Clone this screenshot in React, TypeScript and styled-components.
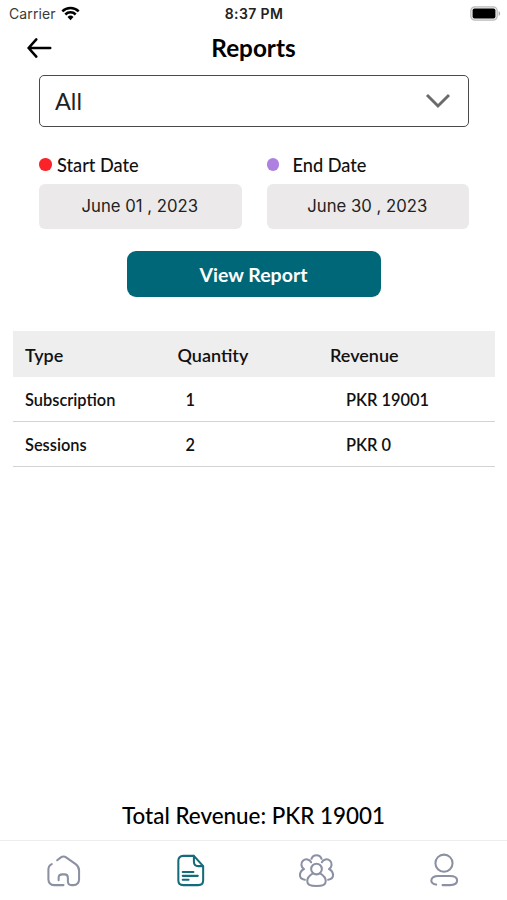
import React from "react";
import styled, { createGlobalStyle } from "styled-components";

const Global = createGlobalStyle`
  * { box-sizing: border-box; }
  body { margin: 0; background: #fff; }
`;

const Screen = styled.div`
  width: 507px;
  height: 900px;
  display: flex;
  flex-direction: column;
  background: #fff;
  color: #111;
  font-family: Lato, "Liberation Sans", sans-serif;
  overflow: hidden;
`;

const StatusBar = styled.div`
  height: 27px;
  flex: none;
  display: grid;
  grid-template-columns: 1fr auto 1fr;
  align-items: center;
  padding: 0 6px 0 9px;
  font-family: Inter, sans-serif;
`;
const Carrier = styled.div`
  display: flex;
  align-items: center;
  gap: 5px;
  font-size: 14px;
  color: #3a3a3a;
  letter-spacing: 0.1px;
`;
const Time = styled.div`
  font-size: 14px;
  letter-spacing: 0.4px;
  margin-right: 2px;
  font-weight: 600;
  color: #222;
`;
const Battery = styled.div`
  display: flex;
  justify-content: flex-end;
`;

const Header = styled.header`
  height: 48px;
  flex: none;
  display: grid;
  grid-template-columns: 26px 1fr 26px;
  align-items: center;
  padding: 0 26px 6px 26px;
`;
const Title = styled.h1`
  margin: 0;
  text-align: center;
  font-size: 24.3px;
  line-height: 30px;
  font-weight: 700;
  color: #000;
`;

const Form = styled.section`
  display: flex;
  flex-direction: column;
  padding: 0 38px 0 39px;
`;
const Select = styled.div`
  height: 52px;
  display: flex;
  align-items: center;
  justify-content: space-between;
  padding: 0 17px 1px 15px;
  border: 1.5px solid #4a4a4a;
  border-radius: 5px;
  font-size: 23.5px;
  color: #222;
`;
const Dates = styled.div`
  display: grid;
  grid-template-columns: 1fr 1fr;
  column-gap: 25px;
  margin-top: 25px;
`;
const DateLabel = styled.div<{ $gap: number }>`
  height: 25px;
  display: flex;
  align-items: center;
  gap: ${(p) => p.$gap}px;
  font-size: 18.2px;
  font-weight: 500;
`;
const Dot = styled.span<{ $color: string }>`
  width: 12.5px;
  height: 12.5px;
  border-radius: 50%;
  background: ${(p) => p.$color};
`;
const DateBox = styled.div`
  height: 45px;
  margin-top: 7px;
  border-radius: 6px;
  background: #ece9ea;
  display: flex;
  align-items: center;
  justify-content: center;
  font-family: Inter, sans-serif;
  font-size: 16.7px;
  padding: 0 1px 1px 0;
  line-height: 22px;
  color: #222;
`;
const ViewButton = styled.button`
  align-self: center;
  width: 254px;
  height: 46px;
  margin-top: 22px;
  padding: 0 1px 0 0;
  border: 0;
  border-radius: 9px;
  background: #006778;
  color: #fff;
  font: 700 19.5px Lato, sans-serif;
`;

const Table = styled.div`
  margin: 34px 12px 0 13px;
`;
const Row = styled.div<{ $head?: boolean }>`
  display: grid;
  grid-template-columns: ${(p) => (p.$head ? "152.5px 152.5px 1fr" : "160.5px 160.5px 1fr")};
  align-items: center;
  height: ${(p) => (p.$head ? 46 : 45)}px;
  padding: ${(p) => (p.$head ? 2 : 1)}px 0 0 12px;
  line-height: 20px;
  font-size: ${(p) => (p.$head ? 18 : 16.4)}px;
  font-weight: 600;
  background: ${(p) => (p.$head ? "#eeeeee" : "#fff")};
  border-bottom: ${(p) => (p.$head ? "0" : "1.5px solid #d3d3d3")};
`;

const Total = styled.div`
  margin-top: auto;
  height: 50px;
  display: flex;
  align-items: center;
  justify-content: center;
  font-size: 22.4px;
  font-weight: 500;
  color: #000;
`;
const TabBar = styled.nav`
  height: 60px;
  flex: none;
  display: grid;
  grid-template-columns: repeat(4, 1fr);
  justify-items: center;
  border-top: 1px solid #ededed;
  padding-top: 11px;
`;
const Tab = styled.svg<{ $active?: boolean }>`
  width: 37px;
  height: 37px;
  fill: none;
  stroke: ${(p) => (p.$active ? "#146c7b" : "#8b90a3")};
  stroke-width: 2.1;
  stroke-linecap: round;
  stroke-linejoin: round;
`;

const rows = [
  ["Subscription", "1", "PKR 19001"],
  ["Sessions", "2", "PKR 0"],
];

export default function App() {
  return (
    <Screen>
      <Global />
      <StatusBar>
        <Carrier>
          Carrier
          <svg width="19" height="15" viewBox="0 0 19 15" fill="none" stroke="#000" strokeWidth="2.5">
            <path d="M1.3 5.3a11.6 11.6 0 0 1 16.4 0M4.3 8.5a7.4 7.4 0 0 1 10.4 0" />
            <path d="M6.5 11a4.3 4.3 0 0 1 6 0l-3 3.2z" fill="#000" stroke="none" />
          </svg>
        </Carrier>
        <Time>8:37 PM</Time>
        <Battery>
          <svg width="31" height="15" viewBox="0 0 31 15">
            <rect x="0.8" y="0.8" width="26.4" height="13.4" rx="4" fill="#eee" stroke="#bbb" strokeWidth="1.2" />
            <rect x="2.6" y="2.6" width="22.8" height="9.8" rx="2" fill="#000" />
            <path d="M28.6 5.2c2 .7 2 3.9 0 4.6z" fill="#aaa" />
          </svg>
        </Battery>
      </StatusBar>

      <Header>
        <svg width="26" height="22" viewBox="0 0 26 22" fill="none" stroke="#000" strokeWidth="2.6" strokeLinecap="round" strokeLinejoin="round">
          <path d="M24.200 11H2.600M10.300 2.400 2.600 11l7.700 8.600" />
        </svg>
        <Title>Reports</Title>
      </Header>

      <Form>
        <Select>
          All
          <svg width="26" height="16" viewBox="0 0 26 16" fill="none" stroke="#6b6b6b" strokeWidth="2.9">
            <path d="m2 2 11 11L24 2" />
          </svg>
        </Select>
        <Dates>
          <div>
            <DateLabel $gap={5.5}><Dot $color="#fb2228" />Start Date</DateLabel>
            <DateBox>June 01 , 2023</DateBox>
          </div>
          <div>
            <DateLabel $gap={13.5}><Dot $color="#ae81e0" />End Date</DateLabel>
            <DateBox>June 30 , 2023</DateBox>
          </div>
        </Dates>
        <ViewButton>View Report</ViewButton>
      </Form>

      <Table>
        <Row $head>
          <span>Type</span>
          <span>Quantity</span>
          <span>Revenue</span>
        </Row>
        {rows.map((row) => (
          <Row key={row[0]}>
            {row.map((cell) => (
              <span key={cell}>{cell}</span>
            ))}
          </Row>
        ))}
      </Table>

      <Total>Total Revenue: PKR 19001</Total>
      <TabBar>
        <Tab viewBox="0 0 38 38">
          <path d="M7 12.500Q3.500 14 3.500 18v10q0 6 6 6h9.500M12.500 8.500l3.500-2.700q3-2.200 6 0l9.500 6.700q3.500 2.500 3.500 6.500v9q0 6-6 6h-1.500q-4 0-4-4v-3.500q0-3.500-3.500-3.500h-2q-4 0-4 3.500v2.500" />
        </Tab>
        <Tab viewBox="0 0 38 38" $active>
          <path d="M22.500 4H11.500q-5 0-5 5v20q0 5 5 5h15.500q5 0 5-5V14.500L22.500 4v6q0 4.500 4.500 4.500h5M11 20.500h11M11 24.500h15.500M11 28.500h6" />
        </Tab>
        <Tab viewBox="0 0 38 38">
          <circle cx="19" cy="17.500" r="5.500" />
          <path d="M15.300 22C12 24 9.500 27 9.500 30q0 5 9.500 5t9.500-5c0-3-2.500-6-5.800-8M13.800 7a5.500 5.500 0 0 1 10.400 0M13.500 10.500a5.300 5.300 0 1 0-7.300 7C3.700 18.700 2 21 2 24q0 3.800 5 4.500M24.500 10.500a5.300 5.300 0 1 1 7.300 7C34.300 18.700 36 21 36 24q0 3.800-5 4.500" />
        </Tab>
        <Tab viewBox="0 0 38 38">
          <circle cx="19.500" cy="11.500" r="8.800" />
          <path d="M11.500 33.500Q6.500 32.500 6.500 29.500 6.500 24.700 14 24.700h11.500q7.500 0 7.500 4.600T25.500 34h-7.500" />
        </Tab>
      </TabBar>
    </Screen>
  );
}
